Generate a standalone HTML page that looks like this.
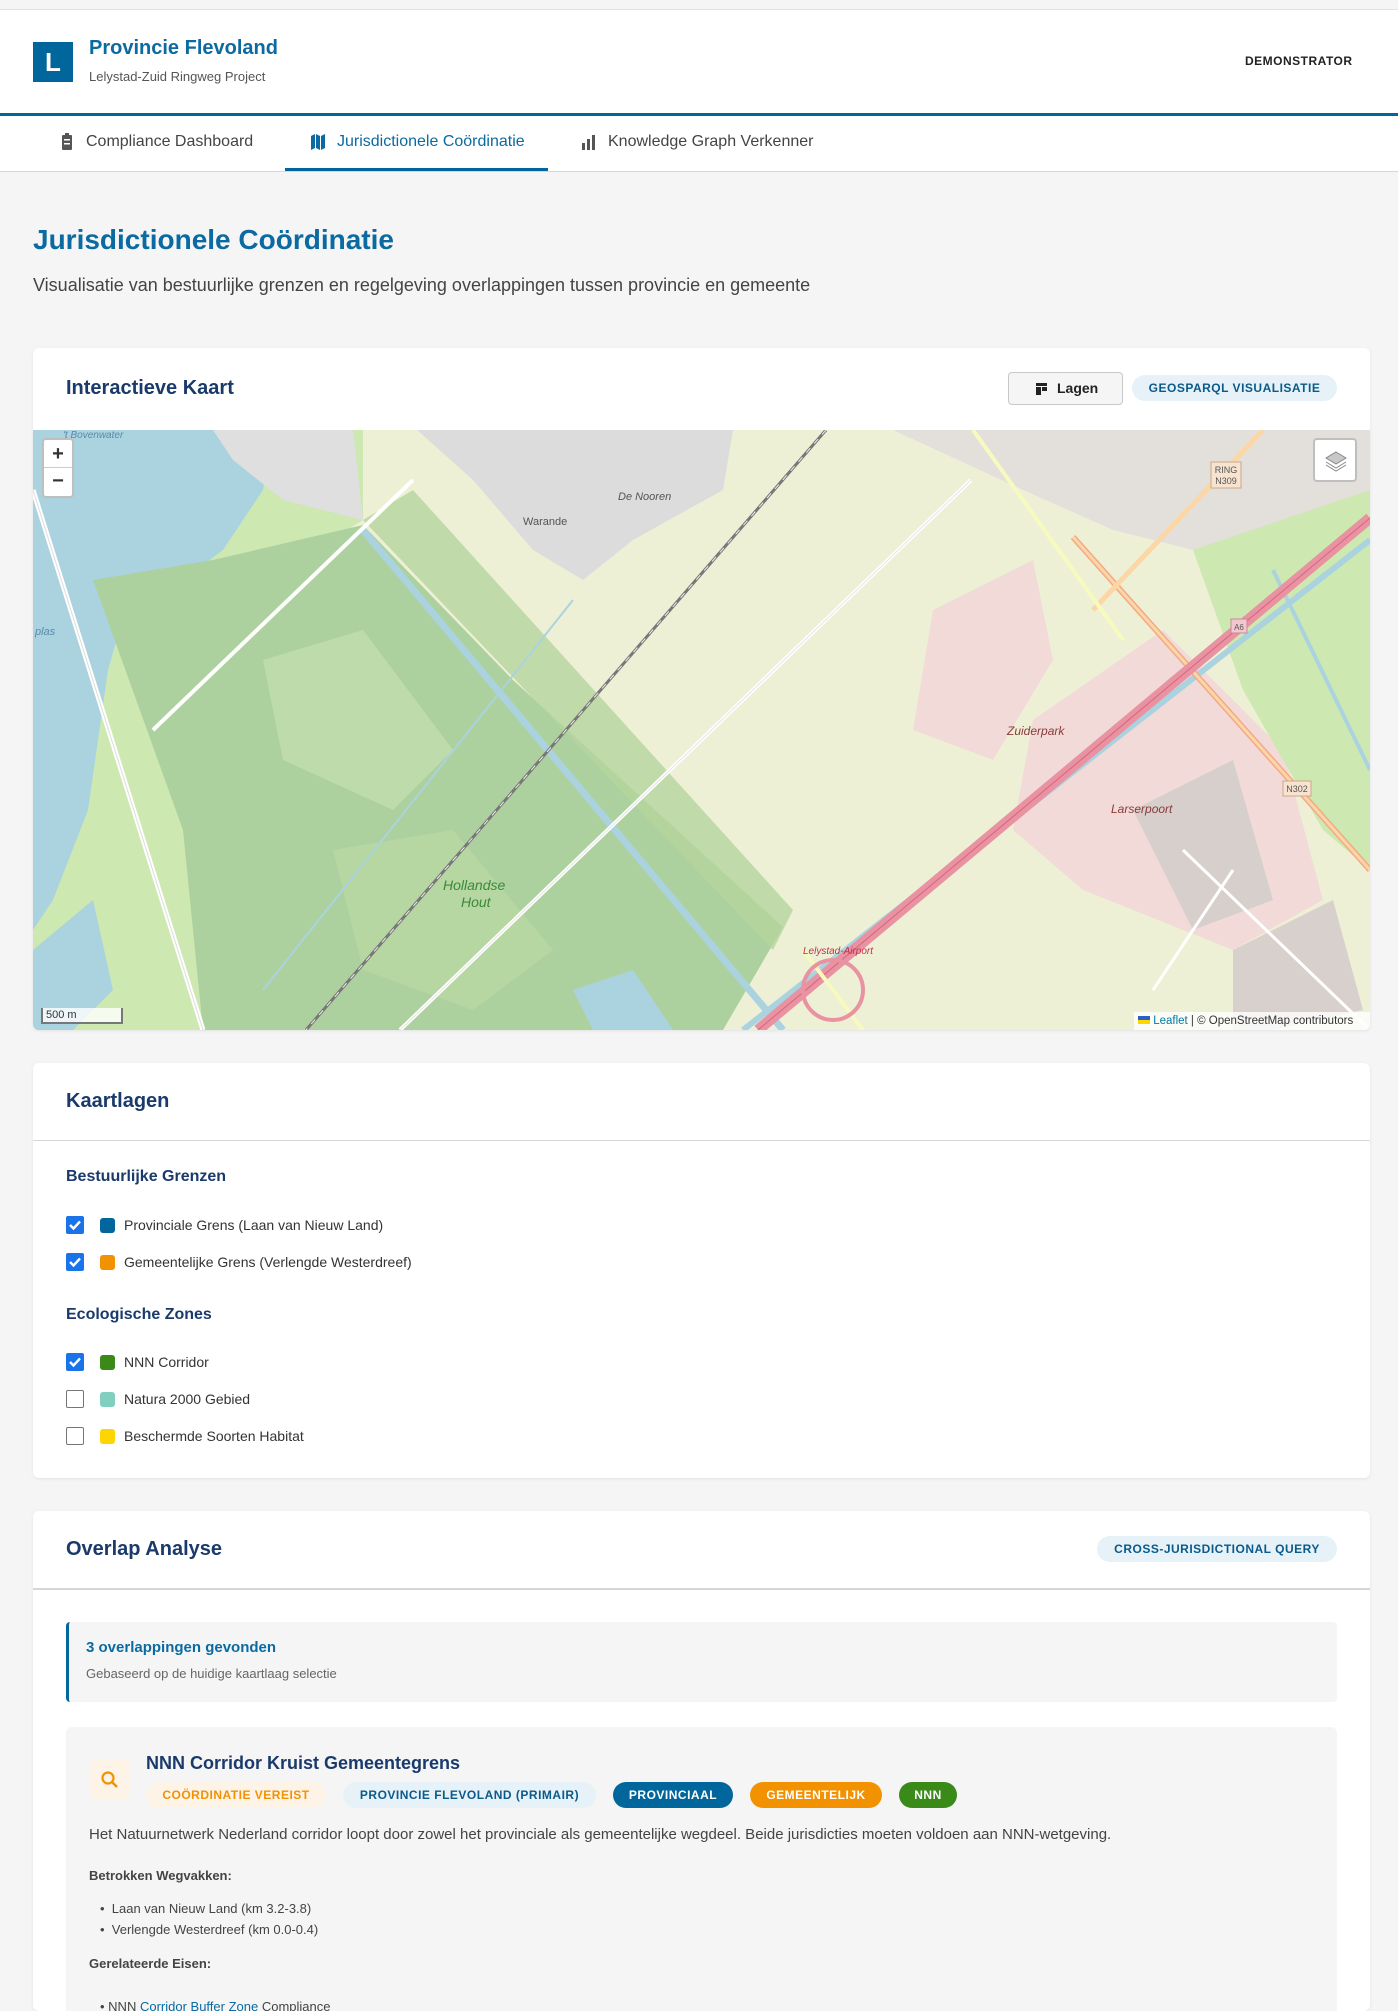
<!DOCTYPE html>
<html><head><meta charset="utf-8">
<style>
*{margin:0;padding:0;box-sizing:border-box}
body{width:1398px;height:1997px;overflow:hidden;background:#f5f5f5;font-family:"Liberation Sans",Arial,sans-serif;color:#333;position:relative}
.abs{position:absolute}
.topstrip{left:0;top:0;width:1398px;height:10px;background:#f5f5f5;border-bottom:1px solid #e2e2e2}
.header{left:0;top:10px;width:1398px;height:103px;background:#fff}
.blueline{left:0;top:113px;width:1398px;height:3px;background:#00669b}
.nav{left:0;top:116px;width:1398px;height:56px;background:#fff;border-bottom:1px solid #d6d6d6}
.navitem{top:132px;font-size:16px;color:#444;line-height:20px}
.card{left:33px;width:1337px;background:#fff;border-radius:6px;box-shadow:0 1px 3px rgba(0,0,0,.08);overflow:hidden}
.h2{font-size:20px;font-weight:bold;color:#1a3a6b}
.badge{height:26px;border-radius:13px;font-size:12px;font-weight:bold;letter-spacing:.5px;line-height:26px;text-align:center}
.cb{width:18px;height:18px;border-radius:2px}
.cb.on{background:#1a73e8}
.cb.off{border:1.5px solid #767676;background:#fff}
.sw{width:15px;height:15px;border-radius:3px}
.lbl{font-size:14px;color:#333;line-height:18px}
.sub{font-size:16px;font-weight:bold;color:#1a3a6b}
</style></head><body>
<div class="abs topstrip"></div>
<div class="abs header">
  <div class="abs" style="left:33px;top:32px;width:40px;height:40px;background:#00669b;color:#fff;font-weight:bold;font-size:26px;line-height:40px;text-align:center">L</div>
  <div class="abs" style="left:89px;top:27px;font-size:20px;font-weight:bold;color:#0a6aa1">Provincie Flevoland</div>
  <div class="abs" style="left:89px;top:59px;font-size:13px;color:#555">Lelystad-Zuid Ringweg Project</div>
  <div class="abs" style="left:1245px;top:44px;font-size:12px;font-weight:bold;color:#222;letter-spacing:.5px">DEMONSTRATOR</div>
</div>
<div class="abs blueline"></div>
<div class="abs nav">
  <svg class="abs" style="left:61px;top:17px" width="12" height="18" viewBox="0 0 12 18"><rect x="1" y="2" width="10" height="15" rx="1" fill="#555"/><rect x="4" y="0" width="4" height="3" fill="#555"/><rect x="3" y="6" width="6" height="1.5" fill="#fff"/><rect x="3" y="10" width="6" height="1.5" fill="#fff"/></svg>
  <div class="abs navitem" style="left:86px;top:16px">Compliance Dashboard</div>
  <svg class="abs" style="left:310px;top:17px" width="16" height="17" viewBox="0 0 16 17"><path d="M1 3 L5 1 L5 15 L1 17Z M6 1 L10 3 L10 17 L6 15Z M11 3 L15 1 L15 15 L11 17Z" fill="#0a6aa1"/></svg>
  <div class="abs navitem" style="left:337px;top:16px;color:#0a6aa1">Jurisdictionele Coördinatie</div>
  <div class="abs" style="left:285px;top:52px;width:263px;height:3px;background:#00669b"></div>
  <svg class="abs" style="left:581px;top:18px" width="16" height="16" viewBox="0 0 16 16"><rect x="1" y="9" width="3" height="7" fill="#555"/><rect x="6" y="5" width="3" height="11" fill="#555"/><rect x="11" y="1" width="3" height="15" fill="#555"/></svg>
  <div class="abs navitem" style="left:608px;top:16px">Knowledge Graph Verkenner</div>
</div>

<div class="abs" style="left:33px;top:224px;font-size:28px;font-weight:bold;color:#0a6aa1">Jurisdictionele Coördinatie</div>
<div class="abs" style="left:33px;top:275px;font-size:18px;color:#444">Visualisatie van bestuurlijke grenzen en regelgeving overlappingen tussen provincie en gemeente</div>

<!-- Map card -->
<div class="abs card" style="top:348px;height:682px">
  <div class="abs h2" style="left:33px;top:29px">Interactieve Kaart</div>
  <div class="abs" style="left:975px;top:24px;width:115px;height:33px;border:1px solid #c8c8c8;border-radius:4px;background:#f5f5f5;font-size:14px;font-weight:bold;color:#222;line-height:31px">
    <svg class="abs" style="left:27px;top:10px" width="11" height="12" viewBox="0 0 11 12"><rect x="0" y="0" width="11" height="3" fill="#222"/><rect x="0" y="4" width="5" height="8" fill="#222"/><rect x="6" y="4" width="5" height="4" fill="#222"/></svg>
    <span class="abs" style="left:48px;top:0">Lagen</span>
  </div>
  <div class="abs badge" style="left:1099px;top:27px;width:205px;background:#e6f2f8;color:#0a5a8a">GEOSPARQL VISUALISATIE</div>
  <svg class="abs" style="left:0;top:82px" width="1337" height="600" viewBox="0 0 1337 600">
    <rect width="1337" height="600" fill="#eef0d6"/>
    <!-- grass left -->
    <polygon points="0,0 330,0 330,90 150,200 170,600 0,600" fill="#cde8b0"/>
    <!-- water -->
    <polygon points="0,0 240,0 230,60 190,120 150,150 95,170 75,240 55,380 20,470 0,500" fill="#aad3df"/>
    <polygon points="0,520 60,470 80,560 40,600 0,600" fill="#aad3df"/>
    <!-- forest -->
    <polygon points="60,150 180,130 330,95 480,250 750,497 690,600 170,600 150,400" fill="#add19e"/>
    <polygon points="230,230 330,200 420,320 360,380 250,330" fill="#c5e0b0" opacity=".7"/>
    <polygon points="300,420 420,400 520,520 440,580 330,540" fill="#b9d8a4" opacity=".7"/>
    <polygon points="540,560 600,540 640,600 560,600" fill="#aad3df"/>
    <!-- green NNN stripe -->
    <polygon points="330,90 380,60 760,480 740,520" fill="#b5d59e" opacity=".8"/>
    <!-- residential top -->
    <polygon points="384,0 700,0 690,60 600,110 550,150 500,120 440,50" fill="#dcdcdc"/>
    <polygon points="180,0 320,0 330,90 250,70 200,30" fill="#e0dfdf"/>
    <polygon points="860,0 1337,0 1337,100 1200,130 1080,100 990,60" fill="#e3e0dc"/>
    <!-- industrial -->
    <polygon points="900,180 1000,130 1020,230 960,330 880,300" fill="#f2dad9"/>
    <polygon points="1000,290 1130,200 1250,320 1290,470 1200,520 1050,460 980,400" fill="#f2dad9"/>
    <polygon points="1100,380 1200,330 1240,470 1160,500" fill="#d6cfcb"/>
    <polygon points="1200,520 1300,470 1330,580 1240,600 1200,600" fill="#d8d0cc"/>
    <!-- grass right -->
    <polygon points="1160,120 1337,60 1337,440 1290,400 1210,260" fill="#cde8b0"/>
    <!-- canals -->
    <line x1="330" y1="100" x2="750" y2="600" stroke="#aad3df" stroke-width="7"/>
    <line x1="1337" y1="110" x2="710" y2="600" stroke="#aad3df" stroke-width="6"/>
    <line x1="1240" y1="140" x2="1337" y2="340" stroke="#aad3df" stroke-width="4"/>
    <line x1="540" y1="170" x2="230" y2="560" stroke="#aad3df" stroke-width="2"/>
    <!-- roads -->
    <line x1="0" y1="60" x2="170" y2="600" stroke="#fff" stroke-width="5"/>
    <line x1="0" y1="60" x2="170" y2="600" stroke="#bbb" stroke-width="1" opacity=".5"/>
    <line x1="380" y1="50" x2="120" y2="300" stroke="#fff" stroke-width="4"/>
    <line x1="938" y1="50" x2="367" y2="600" stroke="#fff" stroke-width="4"/>
    <line x1="938" y1="50" x2="367" y2="600" stroke="#ccc" stroke-width="1" opacity=".5"/>
    <line x1="793" y1="0" x2="273" y2="600" stroke="#777" stroke-width="3"/>
    <line x1="793" y1="0" x2="273" y2="600" stroke="#eee" stroke-width="1" stroke-dasharray="6 6"/>
    <line x1="1040" y1="107" x2="1337" y2="440" stroke="#f2a98a" stroke-width="6"/>
    <line x1="1040" y1="107" x2="1337" y2="440" stroke="#fcd6a4" stroke-width="3"/>
    <line x1="1337" y1="88" x2="725" y2="600" stroke="#e892a2" stroke-width="11"/>
    <line x1="1337" y1="88" x2="725" y2="600" stroke="#d9657e" stroke-width="1"/>
    <line x1="1230" y1="0" x2="1060" y2="180" stroke="#fcd6a4" stroke-width="5"/>
    <line x1="940" y1="0" x2="1090" y2="210" stroke="#f7fabf" stroke-width="4"/>
    <line x1="770" y1="520" x2="830" y2="600" stroke="#f7fabf" stroke-width="4"/>
    <line x1="1120" y1="560" x2="1200" y2="440" stroke="#fff" stroke-width="3"/>
    <line x1="1150" y1="420" x2="1337" y2="600" stroke="#fff" stroke-width="3"/>
    <circle cx="800" cy="560" r="30" fill="none" stroke="#e892a2" stroke-width="4"/>
    <!-- labels -->
    <g font-family="Liberation Sans,sans-serif" font-size="11" fill="#555">
      <text x="490" y="95">Warande</text>
      <text x="585" y="70" font-style="italic">De Nooren</text>
      <text x="410" y="460" font-size="14" fill="#3a8a3a" font-style="italic">Hollandse</text>
      <text x="428" y="477" font-size="14" fill="#3a8a3a" font-style="italic">Hout</text>
      <text x="974" y="305" font-size="12" fill="#8a3a3a" font-style="italic">Zuiderpark</text>
      <text x="1078" y="383" font-size="12" fill="#8a3a3a" font-style="italic">Larserpoort</text>
      <text x="770" y="524" font-size="10" fill="#c0304a" font-style="italic">Lelystad-Airport</text>
      <text x="2" y="205" fill="#5a8aa8" font-style="italic">plas</text>
      <text x="30" y="8" fill="#5a8aa8" font-style="italic" font-size="10">'t Bovenwater</text>
    </g>
    <rect x="1178" y="32" width="30" height="26" fill="#f7e3cf" stroke="#c9a88a"/>
    <text x="1193" y="43" font-size="9" text-anchor="middle" fill="#555" font-family="Liberation Sans">RING</text>
    <text x="1193" y="54" font-size="9" text-anchor="middle" fill="#555" font-family="Liberation Sans">N309</text>
    <rect x="1250" y="351" width="28" height="15" fill="#f7e3cf" stroke="#c9a88a"/>
    <text x="1264" y="362" font-size="9" text-anchor="middle" fill="#555" font-family="Liberation Sans">N302</text>
    <rect x="1198" y="189" width="16" height="14" fill="#f2c7cf" stroke="#c98a9a"/>
    <text x="1206" y="200" font-size="8" text-anchor="middle" fill="#555" font-family="Liberation Sans">A6</text>
  </svg>
  <!-- zoom ctrl -->
  <div class="abs" style="left:9px;top:90px;width:32px;height:60px;background:#fff;border:2px solid rgba(0,0,0,.25);border-radius:4px">
    <div style="height:28px;border-bottom:1px solid #ccc;font-size:20px;font-weight:bold;text-align:center;line-height:28px">+</div>
    <div style="height:28px;font-size:20px;font-weight:bold;text-align:center;line-height:26px">−</div>
  </div>
  <div class="abs" style="left:1280px;top:90px;width:44px;height:44px;background:#fff;border:2px solid rgba(0,0,0,.25);border-radius:4px">
    <svg class="abs" style="left:9px;top:9px" width="24" height="24" viewBox="0 0 24 24"><path d="M12 3 L22 9 L12 15 L2 9Z" fill="#c8c8c8" stroke="#888"/><path d="M2 13 L12 19 L22 13" fill="none" stroke="#888"/><path d="M2 16 L12 22 L22 16" fill="none" stroke="#888"/></svg>
  </div>
  <div class="abs" style="left:8px;top:660px;width:82px;height:16px;background:rgba(255,255,255,.8);border:2px solid #777;border-top:none;font-size:11px;line-height:14px;padding-left:3px">500 m</div>
  <div class="abs" style="left:1101px;top:664px;width:236px;height:18px;background:rgba(255,255,255,.8);font-size:11.5px;line-height:18px;padding-left:4px;color:#333"><span style="display:inline-block;width:12px;height:8px;background:linear-gradient(#2a5fc8 50%,#ffd500 50%)"></span> <span style="color:#0078a8">Leaflet</span> | © OpenStreetMap contributors</div>
</div>

<!-- Kaartlagen card -->
<div class="abs card" style="top:1063px;height:415px">
  <div class="abs h2" style="left:33px;top:27px">Kaartlagen</div>
  <div class="abs" style="left:0;top:77px;width:1337px;height:1px;background:#d6d6d6"></div>
  <div class="abs sub" style="left:33px;top:105px">Bestuurlijke Grenzen</div>
  <div class="abs cb on" style="left:33px;top:153px"><svg width="18" height="18" viewBox="0 0 18 18"><path d="M4 9 L7.5 12.5 L14 5.5" stroke="#fff" stroke-width="2.4" fill="none"/></svg></div>
  <div class="abs sw" style="left:67px;top:155px;background:#00669b"></div>
  <div class="abs lbl" style="left:91px;top:153px">Provinciale Grens (Laan van Nieuw Land)</div>
  <div class="abs cb on" style="left:33px;top:190px"><svg width="18" height="18" viewBox="0 0 18 18"><path d="M4 9 L7.5 12.5 L14 5.5" stroke="#fff" stroke-width="2.4" fill="none"/></svg></div>
  <div class="abs sw" style="left:67px;top:192px;background:#f39200"></div>
  <div class="abs lbl" style="left:91px;top:190px">Gemeentelijke Grens (Verlengde Westerdreef)</div>
  <div class="abs sub" style="left:33px;top:243px">Ecologische Zones</div>
  <div class="abs cb on" style="left:33px;top:290px"><svg width="18" height="18" viewBox="0 0 18 18"><path d="M4 9 L7.5 12.5 L14 5.5" stroke="#fff" stroke-width="2.4" fill="none"/></svg></div>
  <div class="abs sw" style="left:67px;top:292px;background:#3a8a1a"></div>
  <div class="abs lbl" style="left:91px;top:290px">NNN Corridor</div>
  <div class="abs cb off" style="left:33px;top:327px"></div>
  <div class="abs sw" style="left:67px;top:329px;background:#80cfbf"></div>
  <div class="abs lbl" style="left:91px;top:327px">Natura 2000 Gebied</div>
  <div class="abs cb off" style="left:33px;top:364px"></div>
  <div class="abs sw" style="left:67px;top:366px;background:#ffd500"></div>
  <div class="abs lbl" style="left:91px;top:364px">Beschermde Soorten Habitat</div>
</div>

<!-- Overlap card -->
<div class="abs card" style="top:1511px;height:500px">
  <div class="abs h2" style="left:33px;top:27px">Overlap Analyse</div>
  <div class="abs badge" style="left:1064px;top:25px;width:240px;background:#e6f2f8;color:#0a5a8a">CROSS-JURISDICTIONAL QUERY</div>
  <div class="abs" style="left:0;top:77px;width:1337px;height:2px;background:#d6d6d6"></div>
  <div class="abs" style="left:33px;top:111px;width:1271px;height:80px;background:#f5f5f5;border-left:3px solid #00669b;border-radius:4px">
    <div class="abs" style="left:17px;top:17px;font-size:15px;font-weight:bold;color:#0a6aa1">3 overlappingen gevonden</div>
    <div class="abs" style="left:17px;top:44px;font-size:13px;color:#666">Gebaseerd op de huidige kaartlaag selectie</div>
  </div>
  <div class="abs" style="left:33px;top:216px;width:1271px;height:300px;background:#f5f5f5;border-radius:6px">
    <div class="abs" style="left:24px;top:33px;width:40px;height:40px;background:#fdf3e6;border-radius:6px">
      <svg class="abs" style="left:10px;top:10px" width="20" height="20" viewBox="0 0 20 20"><circle cx="8" cy="8" r="5.5" stroke="#f39200" stroke-width="2.2" fill="none"/><line x1="12" y1="12" x2="17" y2="17" stroke="#f39200" stroke-width="2.5"/></svg>
    </div>
    <div class="abs" style="left:80px;top:26px;font-size:18px;font-weight:bold;color:#1a3a6b">NNN Corridor Kruist Gemeentegrens</div>
    <div class="abs badge" style="left:80px;top:55px;width:180px;background:#fdf3e6;color:#f39200">COÖRDINATIE VEREIST</div>
    <div class="abs badge" style="left:277px;top:55px;width:253px;background:#e6f2f8;color:#0a5a8a">PROVINCIE FLEVOLAND (PRIMAIR)</div>
    <div class="abs badge" style="left:547px;top:55px;width:120px;background:#00669b;color:#fff">PROVINCIAAL</div>
    <div class="abs badge" style="left:684px;top:55px;width:132px;background:#f39200;color:#fff">GEMEENTELIJK</div>
    <div class="abs badge" style="left:833px;top:55px;width:58px;background:#3a8a1a;color:#fff">NNN</div>
    <div class="abs" style="left:23px;top:99px;font-size:15px;color:#444">Het Natuurnetwerk Nederland corridor loopt door zowel het provinciale als gemeentelijke wegdeel. Beide jurisdicties moeten voldoen aan NNN-wetgeving.</div>
    <div class="abs" style="left:23px;top:141px;font-size:13px;font-weight:bold;color:#444">Betrokken Wegvakken:</div>
    <div class="abs" style="left:34px;top:171px;font-size:13px;color:#444;line-height:21px">•&nbsp;&nbsp;Laan van Nieuw Land (km 3.2-3.8)<br>•&nbsp;&nbsp;Verlengde Westerdreef (km 0.0-0.4)</div>
    <div class="abs" style="left:23px;top:229px;font-size:13px;font-weight:bold;color:#444">Gerelateerde Eisen:</div>
    <div class="abs" style="left:34px;top:272px;font-size:13px;color:#444">• NNN <span style="color:#0a6aa1">Corridor Buffer Zone</span> Compliance</div>
  </div>
</div>
</body></html>
